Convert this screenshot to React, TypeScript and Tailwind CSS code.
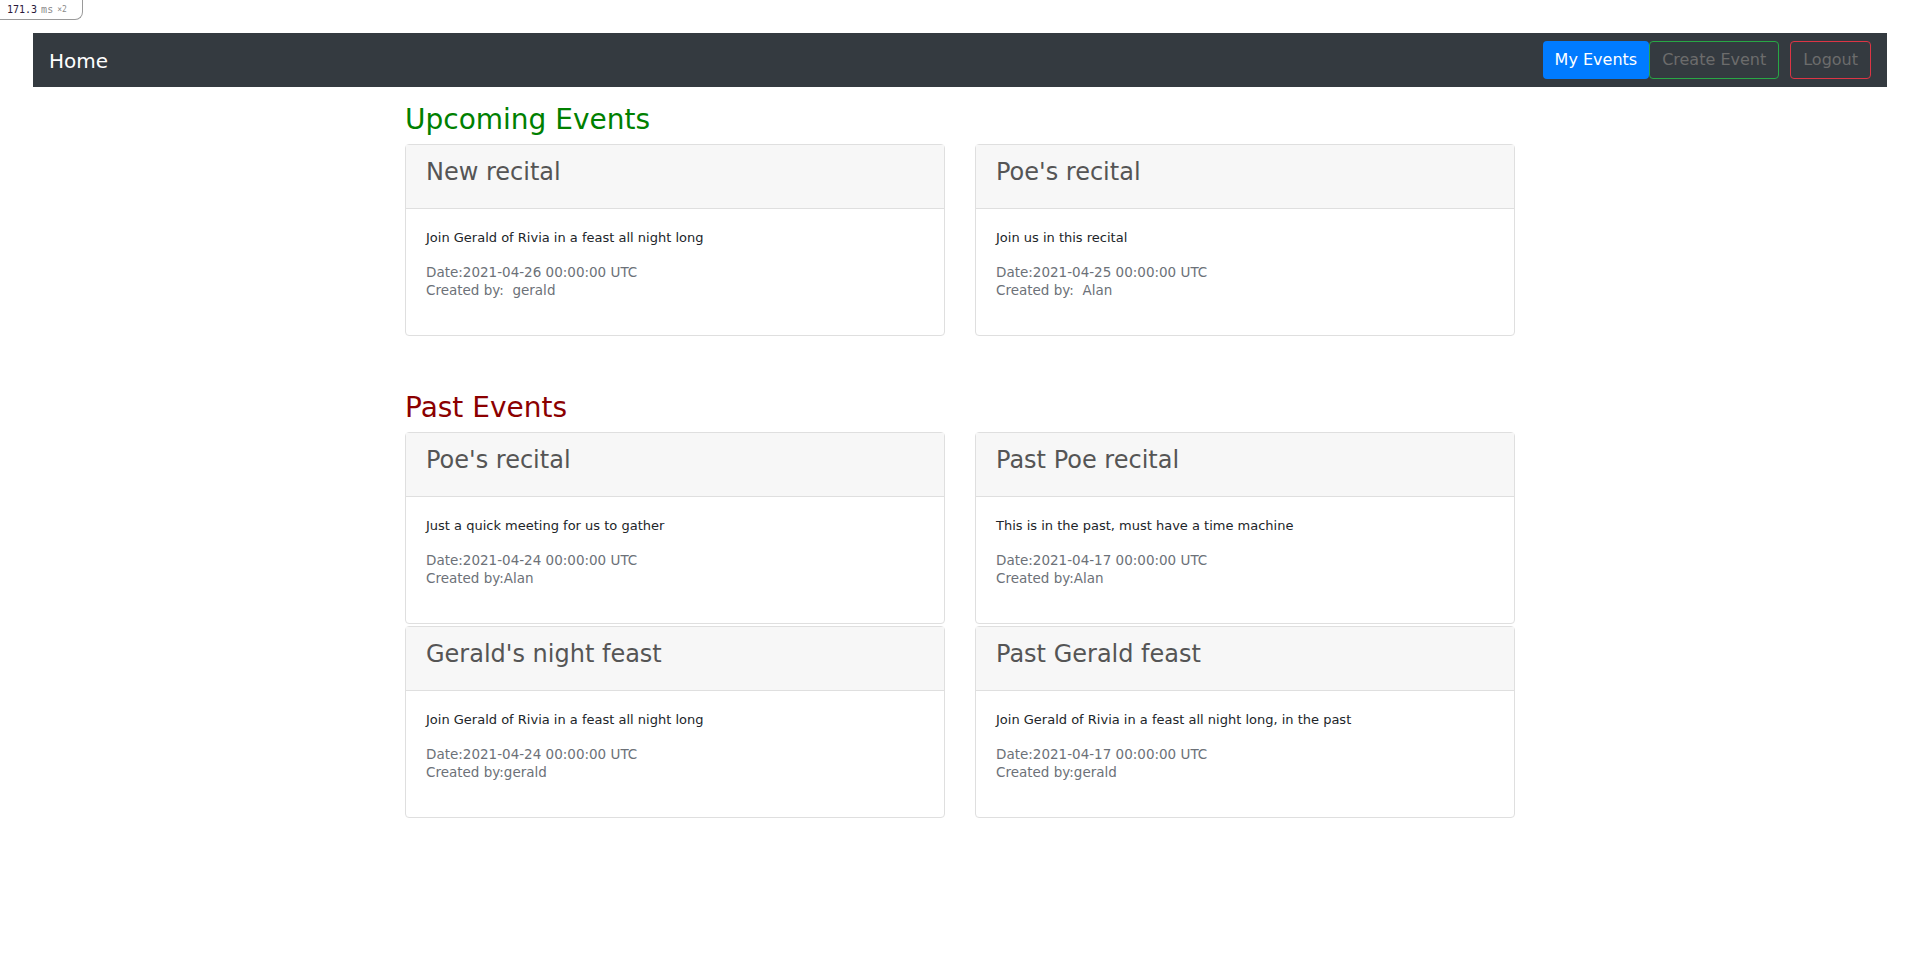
import React from "react";

type EventItem = {
  title: string;
  description: string;
  date: string;
  createdBy: string;
};

const upcoming: EventItem[] = [
  {
    title: "New recital",
    description: "Join Gerald of Rivia in a feast all night long",
    date: "2021-04-26 00:00:00 UTC",
    createdBy: "\u00a0 gerald",
  },
  {
    title: "Poe's recital",
    description: "Join us in this recital",
    date: "2021-04-25 00:00:00 UTC",
    createdBy: "\u00a0 Alan",
  },
];

const past: EventItem[] = [
  {
    title: "Poe's recital",
    description: "Just a quick meeting for us to gather",
    date: "2021-04-24 00:00:00 UTC",
    createdBy: "Alan",
  },
  {
    title: "Past Poe recital",
    description: "This is in the past, must have a time machine",
    date: "2021-04-17 00:00:00 UTC",
    createdBy: "Alan",
  },
  {
    title: "Gerald's night feast",
    description: "Join Gerald of Rivia in a feast all night long",
    date: "2021-04-24 00:00:00 UTC",
    createdBy: "gerald",
  },
  {
    title: "Past Gerald feast",
    description: "Join Gerald of Rivia in a feast all night long, in the past",
    date: "2021-04-17 00:00:00 UTC",
    createdBy: "gerald",
  },
];

const EventCard = ({ event }: { event: EventItem }) => (
  <div className="rounded-[4px] border border-[#dfdfdf] bg-white">
    <div className="border-b border-[#dfdfdf] bg-[#f7f7f7] px-5 pt-[13px] pb-[13px]">
      <h4 className="mb-2 text-[24px] leading-[29px] text-[#555555]">{event.title}</h4>
    </div>
    <div className="px-5 pt-[18px] pb-[20px]">
      <p className="mb-[15px] text-[13px] leading-[21px] text-[#212529]">{event.description}</p>
      <p className="mb-4 text-[13.5px] leading-[18px] text-[#6c7178]">
        Date:{event.date}
        <br />
        Created by:{event.createdBy}
      </p>
    </div>
  </div>
);

const Section = ({
  title,
  color,
  events,
}: {
  title: string;
  color: string;
  events: EventItem[];
}) => (
  <section>
    <h2 className={`mb-[6px] text-[28px] leading-[36px] ${color}`}>{title}</h2>
    <div className="grid grid-cols-2 gap-x-[30px] gap-y-[2px]">
      {events.map((e, i) => (
        <EventCard key={i} event={e} />
      ))}
    </div>
  </section>
);

export default function App() {
  return (
    <div className="relative min-h-[969px] bg-white font-['DejaVu_Sans',sans-serif]">
      {/* render timing badge */}
      <div className="absolute left-0 top-0 flex h-[20px] w-[83px] items-center gap-[4px] rounded-br-[8px] border-r border-b border-[#9a9a9a] bg-white pl-[7px] font-['DejaVu_Sans_Mono',monospace] text-[10px]">
        <span className="text-[#2a1a3a]">171.3</span>
        <span className="text-[#8a8a8a]">ms</span>
        <span className="text-[8px] text-[#8a8a8a]">×2</span>
      </div>

      <div className="px-[33px] pt-[33px]">
        <nav className="flex h-[54px] items-center justify-between bg-[#343a40] px-4">
          <a className="pt-[1px] text-[20px] text-white">Home</a>
          <div className="flex items-center">
            <button className="h-[38px] rounded-[4px] bg-[#007bff] px-3 text-[16px] text-white">
              My Events
            </button>
            <button className="h-[38px] rounded-[4px] border border-[#28a745] px-3 text-[16px] text-[#6c6c6c]">
              Create Event
            </button>
            <button className="ml-[11px] h-[38px] rounded-[4px] border border-[#dc3545] px-3 text-[16px] text-[#6c6c6c]">
              Logout
            </button>
          </div>
        </nav>
      </div>

      <main className="mx-auto w-[1110px] pt-[15px]">
        <Section title="Upcoming Events" color="text-[#008000]" events={upcoming} />
        <div className="mt-[54px]">
          <Section title="Past Events" color="text-[#8b0000]" events={past} />
        </div>
      </main>
    </div>
  );
}
